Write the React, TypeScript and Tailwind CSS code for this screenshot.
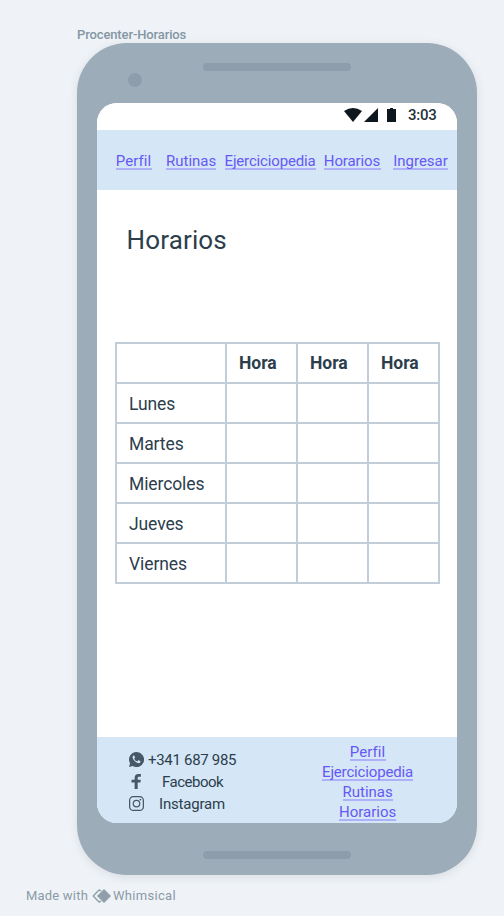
import type { ReactNode } from "react";

function NavLink({ className, children }: { className: string; children: ReactNode }) {
  return (
    <a
      className={`block h-[19px] shrink-0 whitespace-nowrap border-b-2 border-[#aeb0fa] text-center text-[15px] leading-[20px] text-[#6558f5] ${className}`}
    >
      {children}
    </a>
  );
}

const days = ["Lunes", "Martes", "Miercoles", "Jueves", "Viernes"];

function Schedule() {
  return (
    <table className="ml-[18px] w-[323px] table-fixed border-collapse text-left text-[#2c3e4c]">
      <colgroup>
        <col className="w-[110px]" />
        <col className="w-[71px]" />
        <col className="w-[71px]" />
        <col className="w-[71px]" />
      </colgroup>
      <thead>
        <tr className="h-[40px]">
          <th className="border-2 border-[#c1cdd8]" />
          {[0, 1, 2].map((n) => (
            <th key={n} className="border-2 border-[#c1cdd8] p-0 pl-[12px] text-[17.5px] font-bold leading-[24px]">
              Hora
            </th>
          ))}
        </tr>
      </thead>
      <tbody>
        {days.map((day) => (
          <tr key={day} className="h-[40px]">
            <td className="border-2 border-[#c1cdd8] p-0 pl-[12px] pt-px text-[17.5px] leading-[24px] tracking-[-0.1px]">{day}</td>
            <td className="border-2 border-[#c1cdd8]" />
            <td className="border-2 border-[#c1cdd8]" />
            <td className="border-2 border-[#c1cdd8]" />
          </tr>
        ))}
      </tbody>
    </table>
  );
}

function StatusBar() {
  return (
    <div className="flex h-[27px] items-center bg-white pb-[3px] pl-[247px] text-[#0e171e]">
      <svg width="18" height="14" viewBox="0 0 18 14" fill="currentColor">
        <path d="M0 3Q9-3 18 3L9 14Z" />
      </svg>
      <svg className="ml-[2px]" width="14" height="14" viewBox="0 0 14 14" fill="currentColor">
        <path d="M14 0V14H0Z" />
      </svg>
      <svg className="ml-[9px]" width="9" height="14" viewBox="0 0 9 14" fill="currentColor">
        <path d="M3 0h3v1h3v13H0V1h3Z" />
      </svg>
      <span className="ml-[12px] text-[15px] font-medium leading-[18px] tracking-[-0.25px] text-[#26313a]">3:03</span>
    </div>
  );
}

function Footer() {
  return (
    <footer className="flex h-[86.5px] bg-[#d5e6f6]">
      <div className="ml-[32px] mt-[12px] w-[108px] text-[15px] leading-[22px] text-[#2c3e4c]">
        <div className="flex h-[22px] items-center">
          <svg width="15" height="15" viewBox="0 0 24 24" fill="#465968">
            <path d="M12 0a12 12 0 0 0-10.3 18.1L0 24l6.1-1.6A12 12 0 1 0 12 0Z" />
            <path
              d="M8.6 6.1c-.4-.8-.9-.8-1.3-.5C5.9 6.5 5.5 8 6 9.6c1.200 3.700 4.300 6.900 8.200 8.100 1.700.500 3.400 0 4-1.800.2-.8.1-1.200-.5-1.500l-2.300-1.100c-.5-.2-.8-.1-1.100.4l-.8 1c-.3.4-.6.4-1 .2-1.900-.9-3.200-2.100-4.100-3.800-.2-.4-.1-.6.2-.9l.8-1c.2-.4.2-.6.1-.9Z"
              fill="#d5e6f6"
            />
          </svg>
          <span className="ml-[4px] whitespace-nowrap tracking-[-0.3px]">+341 687 985</span>
        </div>
        <div className="flex h-[22px] items-center">
          <svg width="15" height="15" viewBox="0 0 24 24" fill="#465968">
            <path d="M9 24V13.500H4V9h5V6.200C9 2.200 11.200 0 15 0h4v4.200h-2.600c-1.900 0-2.500.8-2.500 2.300V9h5l-.7 4.500h-4.300V24Z" />
          </svg>
          <span className="ml-[18px] tracking-[-0.5px]">Facebook</span>
        </div>
        <div className="flex h-[22px] items-center">
          <svg width="15" height="15" viewBox="0 0 24 24" fill="none" stroke="#465968" strokeWidth="2">
            <rect x="1" y="1" width="22" height="22" rx="6" />
            <circle cx="12" cy="12" r="5.2" />
            <circle cx="18.300" cy="5.700" r="1.400" fill="#465968" stroke="none" />
          </svg>
          <span className="ml-[15px] tracking-[-0.2px]">Instagram</span>
        </div>
      </div>
      <div className="ml-[81px] mt-[5px] flex w-[99px] flex-col items-center gap-px">
        <NavLink className="w-[36px] tracking-[0.1px]">Perfil</NavLink>
        <NavLink className="w-[91px] tracking-[-0.16px]">Ejerciciopedia</NavLink>
        <NavLink className="w-[50px]">Rutinas</NavLink>
        <NavLink className="w-[57px]">Horarios</NavLink>
      </div>
    </footer>
  );
}

export default function App() {
  return (
    <div className="h-[916px] w-[504px] overflow-hidden bg-[#eff3f7] font-['Roboto',sans-serif]">
      <div className="h-[43px] pl-[77px] pt-[27px] text-[13px] font-medium leading-[16px] tracking-[-0.12px] text-[#8496a4]">
        Procenter-Horarios
      </div>
      <div className="ml-[77px] flex h-[832px] w-[400px] flex-col rounded-[50px] bg-[#9dacb9] shadow-[0_2px_10px_rgba(60,80,100,0.13)]">
        <div className="flex h-[60px] shrink-0">
          <div className="ml-[51px] mt-[30px] h-[14px] w-[14px] rounded-full bg-[#8d9dac]" />
          <div className="ml-[61px] mt-[20px] h-[8px] w-[148px] rounded-full bg-[#8d9dac]" />
        </div>
        <main className="mx-[20px] flex h-[720px] shrink-0 flex-col overflow-hidden rounded-[20px] bg-white">
          <StatusBar />
          <nav className="flex h-[60px] shrink-0 bg-[#d5e6f6] pl-[18.5px] pt-[21px]">
            <NavLink className="w-[36px] tracking-[0.1px]">Perfil</NavLink>
            <NavLink className="ml-[14.5px] w-[50px]">Rutinas</NavLink>
            <NavLink className="ml-[8.5px] w-[91px] tracking-[-0.16px]">Ejerciciopedia</NavLink>
            <NavLink className="ml-[8px] w-[57px] tracking-[-0.1px]">Horarios</NavLink>
            <NavLink className="ml-[12.5px] w-[55px]">Ingresar</NavLink>
          </nav>
          <h1 className="ml-[29.5px] mt-[34px] h-[118px] text-[26px] leading-[32px] tracking-[0.15px] text-[#2c3e4c]">Horarios</h1>
          <Schedule />
          <div className="grow" />
          <Footer />
        </main>
        <div className="mx-auto mt-[28px] h-[8px] w-[148px] rounded-full bg-[#8d9dac]" />
      </div>
      <div className="flex h-[41px] items-center pl-[26px] text-[13px] leading-[16px] text-[#8b9aa7]">
        <span className="w-[62px] whitespace-nowrap tracking-[0.2px]">Made with</span>
        <svg className="ml-[4px]" width="19" height="14" viewBox="0 0 19 14">
          <path d="M9 1.800 7 1 1.200 7 7 13l2-.8" fill="none" stroke="#8f9eaa" strokeWidth="1.400" strokeLinejoin="round" />
          <path d="M12 .5 18.500 7 12 13.500 5.500 7Z" fill="#8f9eaa" stroke="#8f9eaa" strokeLinejoin="round" />
        </svg>
        <span className="ml-[2px] tracking-[0.3px]">Whimsical</span>
      </div>
    </div>
  );
}
